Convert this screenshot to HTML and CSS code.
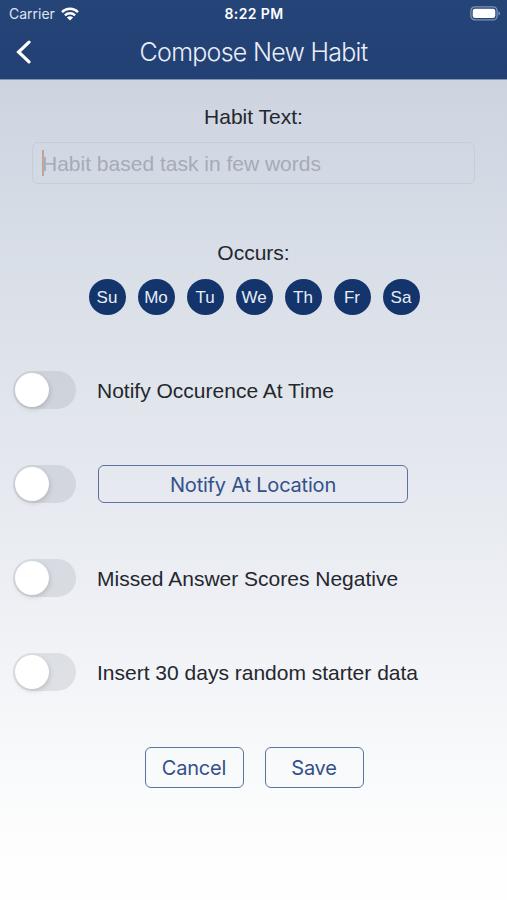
FILE: index.html
```html
<!DOCTYPE html>
<html lang="en">
<head>
  <meta charset="UTF-8" />
  <meta name="viewport" content="width=device-width, initial-scale=1" />
  <title>Compose New Habit</title>
  <link rel="stylesheet" href="styles.css">
</head>
<body>

  <header>
    <div class="status-bar">
      <div class="carrier">
        <span>Carrier</span>
        <svg width="18" height="14" viewBox="0 0 18 14" fill="none" stroke="#fff" stroke-width="2.4">
          <path d="M1 5.1a11.4 11.4 0 0 1 16 0" />
          <path d="M3.9 8.3a7.2 7.2 0 0 1 10.2 0" />
          <path d="M9 13.6L5.9 10.5a4.4 4.4 0 0 1 6.2 0z" fill="#fff" stroke="none" />
        </svg>
      </div>
      <div class="clock">8:22 PM</div>
      <div class="battery">
        <svg width="31" height="15" viewBox="0 0 31 15">
          <rect x=".9" y=".9" width="26.2" height="13" rx="4" fill="none" stroke="#7f93b7" stroke-width="1.3" />
          <rect x="2.7" y="2.7" width="22.6" height="9.4" rx="2.3" fill="#fff" />
          <path d="M28.5 5.2c2 .8 2 3.6 0 4.4z" fill="#8397ba" />
        </svg>
      </div>
    </div>
    <div class="nav-bar">
      <a class="back" href="#" aria-label="Back">
        <svg width="17" height="24" viewBox="0 0 17 24" fill="none" stroke="#fff" stroke-width="3.2" stroke-linecap="round">
          <path d="M14 2.2L3.6 12L14 21.8" />
        </svg>
      </a>
      <h1>Compose New Habit</h1>
    </div>
  </header>

  <main>
    <h2 class="habit-label">Habit Text:</h2>
    <div class="habit-input"><span class="caret"></span><span class="placeholder">Habit based task in few words</span></div>

    <h2 class="occurs-label">Occurs:</h2>
    <div class="days">
      <span>Su</span>
      <span>Mo</span>
      <span>Tu</span>
      <span>We</span>
      <span>Th</span>
      <span>Fr</span>
      <span>Sa</span>
    </div>

    <div class="options">
      <div class="option">
        <div class="switch"></div>
        <p>Notify Occurence At Time</p>
      </div>
      <div class="option">
        <div class="switch"></div>
        <button class="location">Notify At Location</button>
      </div>
      <div class="option">
        <div class="switch"></div>
        <p>Missed Answer Scores Negative</p>
      </div>
      <div class="option">
        <div class="switch"></div>
        <p>Insert 30 days random starter data</p>
      </div>
    </div>

    <div class="actions">
      <button>Cancel</button>
      <button>Save</button>
    </div>
  </main>

</body>
</html>
```
FILE: styles.css
```css
* {
  box-sizing: border-box;
}

body {
  margin: 0;
  height: 900px;
  overflow: hidden;
  font-family: "Liberation Sans", Arial, sans-serif;
  font-size: 21px;
  color: #24272e;
  background: linear-gradient(#cdd4e0 79px, #d5dbe5 200px, #dfe4eb 370px, #e6e9ef 490px, #f0f2f6 640px, #f9fafb 770px, #fefefe 870px);
}

h1, h2, p {
  margin: 0;
  font-weight: 400;
}

svg {
  display: block;
}

/* Header */
header {
  height: 80px;
  background: linear-gradient(#254478, #224073);
  border-bottom: 1px solid #8093b5;
  color: #fff;
}

.status-bar {
  display: grid;
  grid-template-columns: 1fr auto 1fr;
  align-items: center;
  height: 27px;
  padding: 0 6px 0 9px;
  font-family: Inter, sans-serif;
  font-size: 14px;
}

.carrier {
  display: flex;
  align-items: center;
  gap: 6px;
  color: #dfe5ef;
}

.clock {
  font-weight: 600;
  font-size: 14px;
  letter-spacing: 0.4px;
  margin-right: 2px;
}

.battery {
  display: flex;
  justify-content: flex-end;
}

.nav-bar {
  display: grid;
  grid-template-columns: 60px 1fr 60px;
  align-items: center;
  height: 50px;
}

.back {
  padding-left: 15px;
}

h1 {
  font-family: Inter, sans-serif;
  font-weight: 300;
  font-size: 25px;
  letter-spacing: -0.72px;
  text-align: center;
  white-space: nowrap;
  color: #e9eef7;
}

/* Form */
h2 {
  font-size: 21px;
  line-height: 24px;
  text-align: center;
}

.habit-label {
  margin-top: 25px;
}

.habit-input {
  display: flex;
  align-items: center;
  width: 443px;
  height: 42px;
  margin: 13px auto 0 32px;
  padding-left: 9px;
  border: 1px solid #c6cdd8;
  border-radius: 6px;
  color: #a5abb7;
}

.placeholder {
  padding-top: 2px;
}

.caret {
  width: 2px;
  height: 26px;
  margin-right: -2px;
  background: #c4a291;
}

.occurs-label {
  margin-top: 57px;
}

.days {
  display: flex;
  justify-content: center;
  gap: 12px;
  margin-top: 14px;
  padding-left: 1px;
}

.days span {
  width: 37px;
  height: 36px;
  border-radius: 50%;
  background: #14346c;
  color: #e8edf6;
  font-size: 17px;
  line-height: 37px;
  text-align: center;
}

.options {
  display: grid;
  gap: 56px;
  margin-top: 56px;
  padding-left: 13px;
}

.option {
  display: flex;
  align-items: center;
  gap: 22px;
  height: 38px;
  white-space: nowrap;
}

.option p {
  padding-top: 2px;
  margin-left: -1px;
}

.switch {
  flex: none;
  width: 63px;
  height: 38px;
  padding: 2px;
  border-radius: 19px;
  background: rgba(120, 125, 140, 0.17);
}

.switch::before {
  content: "";
  display: block;
  width: 34px;
  height: 34px;
  border-radius: 50%;
  background: #fff;
  box-shadow: 1px 2px 5px rgba(0, 0, 0, 0.15);
}

button {
  padding: 0;
  border: 1.5px solid #5c739f;
  border-radius: 6px;
  background: transparent;
  font-family: Inter, sans-serif;
  font-size: 20px;
  letter-spacing: -0.2px;
  color: #34508a;
}

.location {
  width: 310px;
  height: 38px;
  padding-top: 2px;
}

.actions {
  display: flex;
  justify-content: center;
  gap: 21px;
  margin-top: 56px;
  padding-left: 1px;
}

.actions button {
  width: 99px;
  height: 41px;
}
```
